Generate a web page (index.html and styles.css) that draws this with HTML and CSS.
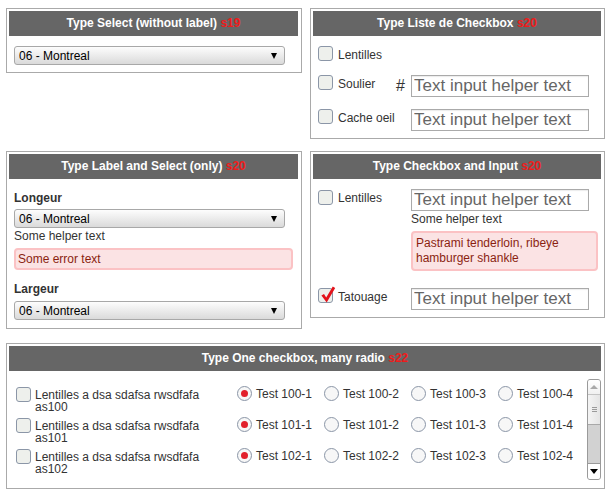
FILE: index.html
```html
<!DOCTYPE html>
<html>
<head>
<meta charset="utf-8">
<link rel="stylesheet" href="styles.css">
</head>
<body>
<div class="page">
  <section class="panel">
    <h2 class="hd">Type Select (without label) <span class="sn">s19</span></h2>
    <div class="body1">
      <div class="sel"><select><option>06 - Montreal</option></select></div>
    </div>
  </section>

  <section class="panel">
    <h2 class="hd">Type Liste de Checkbox <span class="sn">s20</span></h2>
    <div class="cblist">
      <div class="cbrow r1"><span class="cb"></span><span class="lbl">Lentilles</span></div>
      <div class="cbrow"><span class="cb"></span><span class="lbl">Soulier</span><span class="hash">#</span><input class="txt" placeholder="Text input helper text"></div>
      <div class="cbrow"><span class="cb"></span><span class="lbl">Cache oeil</span><span></span><input class="txt" placeholder="Text input helper text"></div>
    </div>
  </section>

  <section class="panel">
    <h2 class="hd">Type Label and Select (only) <span class="sn">s20</span></h2>
    <div class="ls">
      <div class="flabel">Longeur</div>
      <div class="sel s-a"><select><option>06 - Montreal</option></select></div>
      <div class="help">Some helper text</div>
      <div class="err">Some error text</div>
      <div class="flabel second">Largeur</div>
      <div class="sel s-b"><select><option>06 - Montreal</option></select></div>
    </div>
  </section>

  <section class="panel">
    <h2 class="hd">Type Checkbox and Input <span class="sn">s20</span></h2>
    <div class="ci">
      <div class="cbrow">
        <span class="cb down1"></span><span class="lbl">Lentilles</span><span></span>
        <div class="stack">
          <input class="txt" placeholder="Text input helper text">
          <div class="help">Some helper text</div>
          <div class="err err2">Pastrami tenderloin, ribeye hamburger shankle</div>
        </div>
      </div>
      <div class="cbrow">
        <span class="cb"><svg class="tick" width="17" height="18" viewBox="0 0 17 18"><path d="M2.4 9.4 L5 7.9 L7.2 11.6 L13.8 0.4 L16.2 1.9 L7.7 16.4 Z" fill="#e3131b"/></svg></span><span class="lbl">Tatouage</span><span></span>
        <input class="txt" placeholder="Text input helper text">
      </div>
    </div>
  </section>

  <section class="panel wide">
    <h2 class="hd">Type One checkbox, many radio <span class="sn">s22</span></h2>
    <div class="scrollbox">
      <div class="scontent">
        <div class="mrow"><div class="c1"><span class="cb"></span><span class="mtext">Lentilles a dsa sdafsa rwsdfafa as100</span></div><div class="opt"><span class="rd on"></span><span>Test 100-1</span></div><div class="opt"><span class="rd"></span><span>Test 100-2</span></div><div class="opt"><span class="rd"></span><span>Test 100-3</span></div><div class="opt"><span class="rd"></span><span>Test 100-4</span></div></div>
        <div class="mrow"><div class="c1"><span class="cb"></span><span class="mtext">Lentilles a dsa sdafsa rwsdfafa as101</span></div><div class="opt"><span class="rd on"></span><span>Test 101-1</span></div><div class="opt"><span class="rd"></span><span>Test 101-2</span></div><div class="opt"><span class="rd"></span><span>Test 101-3</span></div><div class="opt"><span class="rd"></span><span>Test 101-4</span></div></div>
        <div class="mrow"><div class="c1"><span class="cb"></span><span class="mtext">Lentilles a dsa sdafsa rwsdfafa as102</span></div><div class="opt"><span class="rd on"></span><span>Test 102-1</span></div><div class="opt"><span class="rd"></span><span>Test 102-2</span></div><div class="opt"><span class="rd"></span><span>Test 102-3</span></div><div class="opt"><span class="rd"></span><span>Test 102-4</span></div></div>
      </div>
      <div class="sb">
        <div class="sb-up"><span class="tri-up"></span></div>
        <div class="sb-thumb"><span class="grip"></span></div>
        <div class="sb-track"></div>
        <div class="sb-down"><span class="tri-down"></span></div>
      </div>
    </div>
  </section>
</div>
</body>
</html>
```

FILE: styles.css
```css
html, body {
  margin: 0;
  padding: 0;
  background: #fff;
}
body {
  font-family: "Liberation Sans", Arial, sans-serif;
  font-size: 12px;
  color: #333;
}
.page {
  display: grid;
  grid-template-columns: 296px 295px;
  column-gap: 8px;
  row-gap: 12px;
  align-items: start;
  padding: 8px 0 0 6px;
}
.panel {
  border: 1px solid #aaa;
  padding: 2px 3px 3px 2px;
}
.wide {
  grid-column: 1 / 3;
  margin-top: 2px;
}
.hd {
  margin: 0;
  height: 25px;
  line-height: 25px;
  background: #666;
  color: #fff;
  font-size: 12px;
  font-weight: bold;
  text-align: center;
}
.sn {
  color: #ee1c1c;
}

/* select */
.body1 {
  padding: 10px 0 4px 5px;
}
.sel {
  position: relative;
  width: 271px;
  height: 19px;
}
.sel select {
  -webkit-appearance: none;
  appearance: none;
  display: block;
  box-sizing: border-box;
  width: 100%;
  height: 19px;
  margin: 0;
  padding: 0 0 0 4px;
  border: 1px solid #a8a8a8;
  border-radius: 3px;
  background: linear-gradient(#fdfdfd, #dadada);
  font-family: "Liberation Sans", Arial, sans-serif;
  font-size: 12px;
  color: #000;
  outline: none;
}
.sel::after {
  content: "";
  position: absolute;
  right: 8px;
  top: 7px;
  border-left: 3.5px solid transparent;
  border-right: 3.5px solid transparent;
  border-top: 6px solid #000;
  pointer-events: none;
}

/* checkbox lists */
.cblist {
  display: flex;
  flex-direction: column;
  gap: 12px;
  padding: 10px 0 4px 5px;
}
.cbrow {
  display: grid;
  grid-template-columns: 20px 58px 15px auto;
  align-items: start;
}
.r1 {
  min-height: 16px;
}
.cb {
  position: relative;
  display: block;
  box-sizing: border-box;
  width: 15px;
  height: 15px;
  border: 1px solid #8b96a7;
  border-radius: 3px;
  background: #eef0ec;
  flex: none;
}
.down1 {
  margin-top: 1px;
}
.tick {
  position: absolute;
  left: 0;
  top: -3px;
}
.lbl {
  line-height: 15px;
  padding-top: 2px;
  white-space: nowrap;
}
.hash {
  font-size: 16px;
  line-height: 18px;
  padding-top: 2px;
  color: #333;
}
.txt {
  display: block;
  box-sizing: border-box;
  width: 178px;
  height: 22px;
  margin: 0;
  padding: 0 2px;
  border: 1px solid #aaa;
  box-shadow: inset 0 1px 1px rgba(0, 0, 0, 0.08);
  background: #fff;
  font-family: "Liberation Sans", Arial, sans-serif;
  font-size: 17px;
  color: #333;
  outline: none;
}
.txt::placeholder {
  color: #666;
  opacity: 1;
}

/* label and select */
.ls {
  padding: 12px 0 5px 5px;
}
.flabel {
  font-weight: bold;
  line-height: 14px;
}
.flabel.second {
  margin-top: 12px;
}
.s-a {
  margin-top: 4px;
}
.s-b {
  margin-top: 5px;
}
.help {
  margin-top: 1px;
  line-height: 14px;
  color: #333;
}
.err {
  box-sizing: border-box;
  width: 279px;
  margin-top: 5px;
  padding: 2px 2px;
  border: 2px solid #fbc2c4;
  border-radius: 4px;
  background: #fbe3e4;
  color: #8a1f11;
  line-height: 14px;
}

/* checkbox and input */
.ci {
  display: flex;
  flex-direction: column;
  gap: 17px;
  padding: 10px 0 4px 5px;
}
.stack {
  display: flex;
  flex-direction: column;
}
.err2 {
  width: 187px;
  padding: 3px 4px 3px 3px;
  line-height: 15px;
}

/* many radio */
.scrollbox {
  display: flex;
  height: 101px;
  margin: 8px 0 5px 0;
}
.scontent {
  flex: 1;
  overflow: hidden;
  padding: 8px 0 0 7px;
}
.mrow {
  display: grid;
  grid-template-columns: 221px repeat(4, 87px);
  height: 31px;
  align-items: start;
}
.c1 {
  display: flex;
  gap: 4px;
  align-items: flex-start;
}
.mtext {
  width: 180px;
  line-height: 12px;
  margin-top: 2px;
}
.opt {
  display: flex;
  gap: 4px;
  align-items: flex-start;
  line-height: 15px;
  white-space: nowrap;
}
.rd {
  display: flex;
  align-items: center;
  justify-content: center;
  box-sizing: border-box;
  width: 15px;
  height: 15px;
  margin-top: -1px;
  border: 1px solid #8b96a7;
  border-radius: 50%;
  background: #f7f7f7;
  flex: none;
}
.rd.on::after {
  content: "";
  width: 7px;
  height: 7px;
  border-radius: 50%;
  background: #e2202b;
}

/* fake scrollbar */
.sb {
  display: flex;
  flex-direction: column;
  box-sizing: border-box;
  width: 14px;
  border: 1px solid #9a9a9a;
  border-radius: 3px;
  background: #d2d2d2;
  overflow: hidden;
}
.sb-up {
  display: flex;
  align-items: center;
  justify-content: center;
  height: 14px;
  background: linear-gradient(#ffffff, #f0f0f0);
  border-bottom: 1px solid #c4c4c4;
}
.tri-up {
  border-left: 4px solid transparent;
  border-right: 4px solid transparent;
  border-bottom: 4px solid #a9a9a9;
}
.sb-thumb {
  display: flex;
  align-items: center;
  justify-content: center;
  height: 29px;
  background: linear-gradient(90deg, #f4f4f4, #e4e4e4);
  border-bottom: 1px solid #a8a8a8;
}
.grip {
  width: 5px;
  height: 5px;
  background: repeating-linear-gradient(#9a9a9a 0, #9a9a9a 1px, transparent 1px, transparent 2px);
}
.sb-track {
  flex: 1;
}
.sb-down {
  display: flex;
  align-items: center;
  justify-content: center;
  height: 15px;
  background: #fff;
  border-top: 1px solid #9a9a9a;
}
.tri-down {
  border-left: 4px solid transparent;
  border-right: 4px solid transparent;
  border-top: 5px solid #000;
}
```
